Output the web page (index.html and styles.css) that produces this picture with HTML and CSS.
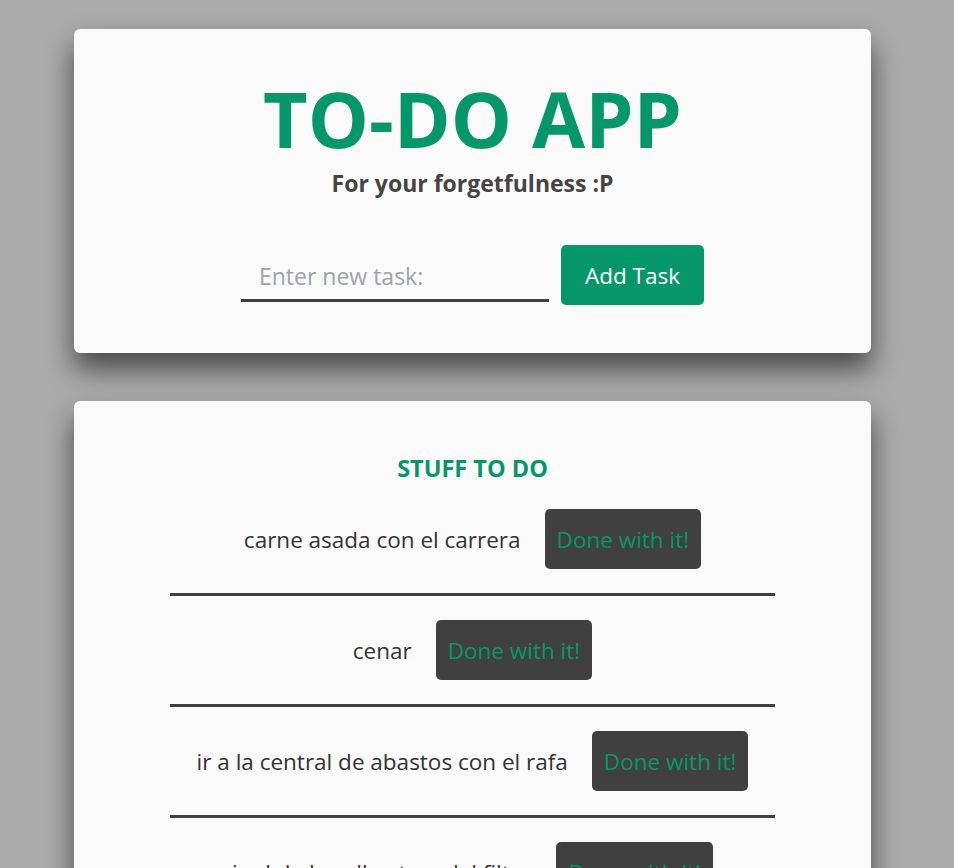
FILE: index.html
```html
<!DOCTYPE html>
<html lang="es">
<head>
<meta charset="utf-8">
<title>TO-DO APP</title>
<link rel="stylesheet" href="styles.css">
</head>
<body>
<main class="page">
  <section class="card card-header">
    <h1 class="title">TO-DO APP</h1>
    <p class="subtitle">For your forgetfulness :P</p>
    <form class="add-form">
      <input class="task-input" type="text" placeholder="Enter new task:">
      <button class="add-btn" type="button">Add Task</button>
    </form>
  </section>
  <section class="card card-list">
    <h2 class="list-title">STUFF TO DO</h2>
    <ul class="tasks">
      <li class="task"><span class="task-text">carne asada con el carrera</span><button class="done-btn" type="button">Done with it!</button></li>
      <li class="task"><span class="task-text">cenar</span><button class="done-btn" type="button">Done with it!</button></li>
      <li class="task"><span class="task-text">ir a la central de abastos con el rafa</span><button class="done-btn" type="button">Done with it!</button></li>
      <li class="task"><span class="task-text">ir al de la calle atras del filtro</span><button class="done-btn" type="button">Done with it!</button></li>
    </ul>
  </section>
</main>
</body>
</html>
```
FILE: styles.css
```css
* { box-sizing: border-box; }
html, body { margin: 0; padding: 0; }
body {
  background: #ababab;
  font-family: "Open Sans", "Noto Sans", sans-serif;
  color: #333;
}
.page {
  width: 797px;
  margin-left: 74px;
  padding-top: 29px;
  display: flex;
  flex-direction: column;
  gap: 48px;
}
.card {
  background: #fafafa;
  border-radius: 6px;
  box-shadow: 0 16px 28px rgba(0, 0, 0, 0.58);
  display: flex;
  flex-direction: column;
  align-items: center;
}
.card-header { padding: 44px 0 48px; }
.title {
  margin: 0;
  font-size: 77px;
  line-height: 92px;
  font-weight: 700;
  color: #05976a;
}
.subtitle {
  margin: 4px 0 0;
  font-size: 23px;
  line-height: 28px;
  font-weight: 700;
  color: #444;
}
.add-form {
  margin-top: 48px;
  display: flex;
  align-items: flex-start;
  gap: 12px;
}
.task-input {
  width: 308px;
  height: 57px;
  padding: 7px 18px 0;
  border: none;
  border-bottom: 3px solid #404040;
  background: transparent;
  font-family: inherit;
  font-size: 23px;
  color: #333;
  outline: none;
}
.task-input::placeholder { color: #9ca3af; }
.add-btn {
  height: 60px;
  padding: 0 24px;
  border: none;
  border-radius: 5px;
  background: #05976a;
  color: #fff;
  font-family: inherit;
  font-size: 22.5px;
}
.card-list { padding: 55px 96px 0; align-items: stretch; }
.list-title {
  margin: 0 0 5px;
  text-align: center;
  font-size: 23.5px;
  line-height: 24px;
  font-weight: 700;
  color: #05976a;
}
.tasks { list-style: none; margin: 0; padding: 0; }
.task {
  display: flex;
  justify-content: center;
  align-items: center;
  gap: 24px;
  padding: 24px 0;
  border-bottom: 3px solid #404040;
}
.task-text { font-size: 22.5px; color: #333; }
.done-btn {
  height: 60px;
  padding: 0 12px;
  border: none;
  border-radius: 5px;
  background: #404040;
  color: #05976a;
  font-family: inherit;
  font-size: 22.5px;
}
```
